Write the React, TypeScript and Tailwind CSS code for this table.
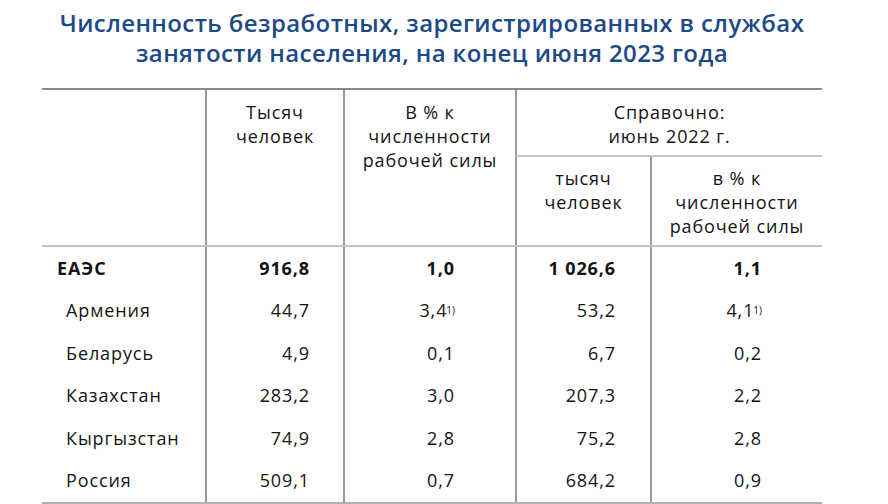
import React from "react"

type Row = {
  name: string
  total: string
  pct: string
  pctNote?: boolean
  prev: string
  prevPct: string
  prevNote?: boolean
  bold?: boolean
}

const rows: Row[] = [
  { name: "ЕАЭС", total: "916,8", pct: "1,0", prev: "1 026,6", prevPct: "1,1", bold: true },
  { name: "Армения", total: "44,7", pct: "3,4", pctNote: true, prev: "53,2", prevPct: "4,1", prevNote: true },
  { name: "Беларусь", total: "4,9", pct: "0,1", prev: "6,7", prevPct: "0,2" },
  { name: "Казахстан", total: "283,2", pct: "3,0", prev: "207,3", prevPct: "2,2" },
  { name: "Кыргызстан", total: "74,9", pct: "2,8", prev: "75,2", prevPct: "2,8" },
  { name: "Россия", total: "509,1", pct: "0,7", prev: "684,2", prevPct: "0,9" },
]

function Note() {
  return <sup className="text-[10px] tracking-normal relative -top-[3px] -ml-[1px]">1)</sup>
}

export default function App() {
  return (
    <div
      className="w-[888px] h-[504px] bg-white overflow-hidden pl-[42px] text-[#141414]"
      style={{ fontFamily: '"Open Sans", "Noto Sans", sans-serif' }}
    >
      <div className="w-[780px] pt-[8px] text-center text-[24px] leading-[30px] font-semibold text-[#1d4a87] tracking-[0.4px]">
        Численность безработных, зарегистрированных в службах
        <br />
        занятости населения, на конец июня 2023 года
      </div>

      <div className="mt-[20px] w-[780px] text-[18px] tracking-[0.9px]">
        {/* header */}
        <div className="grid grid-cols-[163px_138px_172px_135px_172px] grid-rows-[67px_88px] border-t-2 border-[#8a8a8a] border-b-2 border-b-[#c4c4c4]">
          <div className="row-span-2" />
          <div className="row-span-2 border-l-2 border-[#9a9a9a] text-center leading-[24px] pt-[10px]">
            Тысяч
            <br />
            человек
          </div>
          <div className="row-span-2 border-l-2 border-[#9a9a9a] text-center leading-[24px] pt-[10px]">
            В % к<br />
            численности
            <br />
            рабочей силы
          </div>
          <div className="col-span-2 border-l-2 border-[#9a9a9a] border-b-2 border-b-[#c4c4c4] text-center leading-[24px] pt-[10px]">
            Справочно:
            <br />
            июнь 2022 г.
          </div>
          <div className="border-l-2 border-[#9a9a9a] text-center leading-[24px] pt-[9px]">
            тысяч
            <br />
            человек
          </div>
          <div className="border-l-2 border-[#9a9a9a] text-center leading-[24px] pt-[9px]">
            в % к<br />
            численности
            <br />
            рабочей силы
          </div>
        </div>

        {/* body */}
        <div className="grid grid-cols-[163px_138px_172px_135px_172px] border-b-[3px] border-[#b0b0b0]">
          {rows.map((r) => (
            <React.Fragment key={r.name}>
              <div className={`h-[42.5px] flex items-center ${r.bold ? "pl-[15px] font-bold" : "pl-[24px]"}`}>
                {r.name}
              </div>
              <div className={`h-[42.5px] flex items-center justify-end pr-[33px] border-l-2 border-[#9a9a9a] ${r.bold ? "font-bold" : ""}`}>
                {r.total}
              </div>
              <div className={`h-[42.5px] flex items-center justify-end pr-[60px] border-l-2 border-[#9a9a9a] ${r.bold ? "font-bold" : ""}`}>
                <span>
                  {r.pct}
                  {r.pctNote && <Note />}
                </span>
              </div>
              <div className={`h-[42.5px] flex items-center justify-end pr-[34px] border-l-2 border-[#9a9a9a] ${r.bold ? "font-bold" : ""}`}>
                {r.prev}
              </div>
              <div className={`h-[42.5px] flex items-center justify-end pr-[60px] border-l-2 border-[#9a9a9a] ${r.bold ? "font-bold" : ""}`}>
                <span>
                  {r.prevPct}
                  {r.prevNote && <Note />}
                </span>
              </div>
            </React.Fragment>
          ))}
        </div>
      </div>
    </div>
  )
}
